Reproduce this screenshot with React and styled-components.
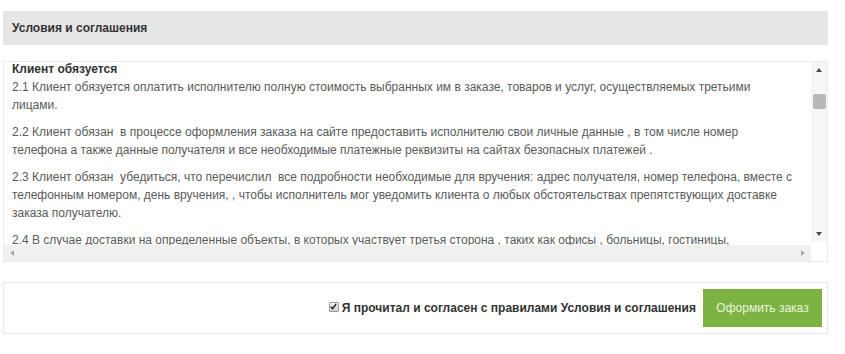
import React, { useLayoutEffect, useRef, useState } from "react";
import styled, { createGlobalStyle } from "styled-components";

const GlobalStyle = createGlobalStyle`
    body {
        margin: 0;
        background: #fff;
        font-family: "Liberation Sans", Arial, sans-serif;
    }
`

// every paragraph is a list of its lines, broken where the reference breaks them
const intro = [
    [
        "1.1 Настоящие условия регулируют отношения между исполнителем и клиентом, оформившим заказ на сайте, и являются",
        "публичной офертой.",
    ],
    [
        "1.2 Оформляя заказ, клиент подтверждает, что ознакомился с условиями и соглашениями и принимает их в полном объеме",
        "без каких-либо оговорок.",
    ],
    ["1.3 Исполнитель оставляет за собой право вносить изменения в настоящие условия без уведомления клиента."],
    [
        "1.4 Все цены на сайте указаны с учетом налогов и могут быть изменены исполнителем в одностороннем порядке до момента",
        "оформления заказа.",
    ],
    ["1.5 Заказ считается принятым после подтверждения его исполнителем."],
]

const duties = [
    [
        "2.1 Клиент обязуется оплатить исполнителю полную стоимость выбранных им в заказе, товаров и услуг, осуществляемых третьими",
        "лицами.",
    ],
    [
        "2.2 Клиент обязан\u00a0 в процессе оформления заказа на сайте предоставить исполнителю свои личные данные , в том числе номер",
        "телефона а также данные получателя и все необходимые платежные реквизиты на сайтах безопасных платежей .",
    ],
    [
        "2.3 Клиент обязан\u00a0 убедиться, что перечислил\u00a0 все подробности необходимые для вручения: адрес получателя, номер телефона, вместе с",
        "телефонным номером, день вручения, , чтобы исполнитель мог уведомить клиента о любых обстоятельствах препятствующих доставке",
        "заказа получателю.",
    ],
    [
        "2.4 В случае доставки на определенные объекты, в которых участвует третья сторона , таких как офисы , больницы, гостиницы,",
        "клиент обязан уточнить правила пропуска и время, в которое возможна доставка.",
    ],
    ["2.5 Клиент обязан проверить заказ при получении и сообщить исполнителю о любых несоответствиях в течение суток."],
]

const rights = [
    ["3.1 Исполнитель обязуется доставить заказ в указанный клиентом день и по указанному адресу."],
    ["3.2 Исполнитель вправе заменить отдельные товары на аналогичные по стоимости в случае их отсутствия."],
    ["3.3 Исполнитель не несет ответственности за задержку доставки, вызванную неверными данными клиента."],
]

const renderParagraphs = (list) => list.map((lines) => (
    <Paragraph key={lines[0]}>
        {lines.map((line, i) => (
            <React.Fragment key={i}>
                {i > 0 && <br />}
                {line}
            </React.Fragment>
        ))}
    </Paragraph>
))

const ARROW_SIZE = 16
const MIN_THUMB = 15

const App = () => {
    const viewRef = useRef(null)
    const headRef = useRef(null)
    const [thumb, setThumb] = useState({ top: 0, size: MIN_THUMB })

    useLayoutEffect(() => {
        const view = viewRef.current
        if (!view || !headRef.current) return
        // the reference shows the box already scrolled down to section 2
        view.scrollTop = headRef.current.offsetTop
        const rail = view.clientHeight - ARROW_SIZE * 2
        const size = Math.max(MIN_THUMB, rail * view.clientHeight / view.scrollHeight)
        const top = (rail - size) * view.scrollTop / (view.scrollHeight - view.clientHeight)
        setThumb({ top, size })
    }, [])

    return (
        <Page>
            <GlobalStyle />
            <Header>Условия и соглашения</Header>
            <ScrollPane>
                <Viewport ref={viewRef}>
                    <TermsContent>
                        <SectionTitle>Общие положения</SectionTitle>
                        {renderParagraphs(intro)}
                        <SectionTitle ref={headRef}>Клиент обязуется</SectionTitle>
                        {renderParagraphs(duties)}
                        <SectionTitle>Исполнитель обязуется</SectionTitle>
                        {renderParagraphs(rights)}
                    </TermsContent>
                </Viewport>
                <VerticalBar>
                    <ArrowButton><Arrow $dir="up" /></ArrowButton>
                    <Rail>
                        <Thumb style={{ top: thumb.top, height: thumb.size }} />
                    </Rail>
                    <ArrowButton><Arrow $dir="down" /></ArrowButton>
                </VerticalBar>
                <HorizontalBar>
                    <ArrowButton><Arrow $dir="left" $muted /></ArrowButton>
                    <ArrowButton><Arrow $dir="right" $muted /></ArrowButton>
                </HorizontalBar>
            </ScrollPane>
            <Footer>
                <AgreeLabel>
                    <HiddenInput type="checkbox" defaultChecked />
                    <CheckBox>
                        <svg width="7" height="7" viewBox="0 0 8 8">
                            <path d="M1 4.2 L3 6.4 L7 1.2" fill="none" stroke="#222" strokeWidth="1.6" />
                        </svg>
                    </CheckBox>
                    Я прочитал и согласен с правилами Условия и соглашения
                </AgreeLabel>
                <OrderButton>Оформить заказ</OrderButton>
            </Footer>
        </Page>
    )
}

export default App

const Page = styled.div`
    display: flex;
    flex-direction: column;
    width: 825px;
    padding: 11px 0 20px 3px;
`

const Header = styled.div`
    display: flex;
    align-items: center;
    height: 34px;
    padding: 0 9px;
    background: #e6e6e6;
    color: #333;
    font-size: 12px;
    font-weight: 700;
`

const ScrollPane = styled.div`
    position: relative;
    display: grid;
    grid-template-rows: 183px 16px;
    margin-top: 16px;
    border: 1px solid #ececec;
`

const Viewport = styled.div`
    overflow: hidden;
`

const TermsContent = styled.div`
    min-height: 1890px;
    padding-left: 8px;
`

const SectionTitle = styled.div`
    margin-bottom: 1px;
    color: #333;
    font-size: 12px;
    font-weight: 700;
    line-height: 15px;
`

const Paragraph = styled.p`
    margin: 0 0 9px;
    color: #5a5a5a;
    font-size: 12px;
    line-height: 18px;
    white-space: nowrap;
`

const VerticalBar = styled.div`
    position: absolute;
    top: 0;
    right: 0;
    display: flex;
    flex-direction: column;
    width: 16px;
    height: 180px;
    background: rgba(245, 245, 245, 0.85);
`

const Rail = styled.div`
    position: relative;
    flex: 1;
`

const Thumb = styled.div`
    position: absolute;
    left: 2px;
    right: 1px;
    border-radius: 2px;
    background: #b8b8b8;
`

const HorizontalBar = styled.div`
    display: flex;
    justify-content: space-between;
    margin-right: 16px;
    background: #f0f0f0;
`

const ArrowButton = styled.div`
    display: flex;
    justify-content: center;
    align-items: center;
    width: 16px;
    height: 16px;
    flex: none;
`

const Arrow = styled.span`
    width: 0;
    height: 0;
    border: 3.5px solid transparent;
    ${({ $dir, $muted }) => {
        const color = $muted ? "#aaaaaa" : "#4a4a4a"
        if ($dir === "up") return `border-top-width: 0; border-bottom: 4px solid ${color};`
        if ($dir === "down") return `border-bottom-width: 0; border-top: 4px solid ${color};`
        if ($dir === "left") return `border-left-width: 0; border-right: 4px solid ${color};`
        return `border-right-width: 0; border-left: 4px solid ${color};`
    }}
`

const Footer = styled.div`
    display: flex;
    justify-content: flex-end;
    align-items: center;
    gap: 7px;
    margin-top: 20px;
    padding: 6px 5px;
    border: 1px solid #e8e8e8;
`

const AgreeLabel = styled.label`
    display: flex;
    align-items: center;
    gap: 3px;
    color: #333;
    font-size: 12px;
    font-weight: 700;
    cursor: pointer;
`

const HiddenInput = styled.input`
    display: none;
`

const CheckBox = styled.span`
    display: inline-flex;
    justify-content: center;
    align-items: center;
    width: 8px;
    height: 8px;
    margin-top: -3px;
    border: 1px solid #9a9a9a;
    border-radius: 1px;
    background: linear-gradient(#f2f2f2, #cfcfcf);
`

const OrderButton = styled.button`
    width: 119px;
    height: 38px;
    border: none;
    background: #7cb342;
    color: #eaf4de;
    font-family: inherit;
    font-size: 12px;
    cursor: pointer;
`
